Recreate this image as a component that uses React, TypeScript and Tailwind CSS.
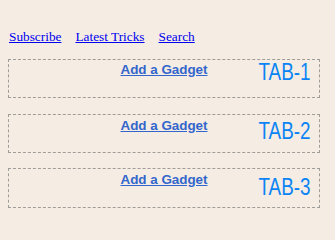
const links = ['Subscribe', 'Latest Tricks', 'Search'];

const tabs = [
  { name: 'TAB-1', gadgetTop: 'mt-[2px]', tabTop: 'mt-px', height: 'h-[39px]', gap: 'mt-[15px]' },
  { name: 'TAB-2', gadgetTop: 'mt-[3px]', tabTop: 'mt-[5px]', height: 'h-[39px]', gap: 'mt-[16px]' },
  { name: 'TAB-3', gadgetTop: 'mt-[3px]', tabTop: 'mt-[7px]', height: 'h-[40px]', gap: 'mt-[15px]' },
];

export default function App() {
  return (
    <div className="min-h-screen bg-[#f5ece3] px-2 pt-[29px]">
      {/* Top links */}
      <div className="flex gap-[14px] pl-px font-['Liberation_Serif',serif] text-[13.3px] leading-[15px]">
        {links.map((l) => (
          <a key={l} href="#" className="text-[#0000ee] underline">
            {l}
          </a>
        ))}
      </div>

      {/* Gadget sections */}
      {tabs.map((t) => (
        <div
          key={t.name}
          className={`${t.gap} ${t.height} grid w-[312px] border border-dashed border-[#a09c98]`}
        >
          <a
            href="#"
            className={`${t.gadgetTop} col-start-1 row-start-1 self-start justify-self-center font-['Liberation_Sans',Arial,sans-serif] text-[13.4px] font-bold leading-[15px] text-[#3366cc] underline`}
          >
            Add a Gadget
          </a>
          <span
            className={`${t.tabTop} col-start-1 row-start-1 mr-[9px] origin-right scale-x-[0.82] self-start justify-self-end font-['Liberation_Sans',Arial,sans-serif] text-[23px] leading-none text-[#0a84f5]`}
          >
            {t.name}
          </span>
        </div>
      ))}
    </div>
  );
}
